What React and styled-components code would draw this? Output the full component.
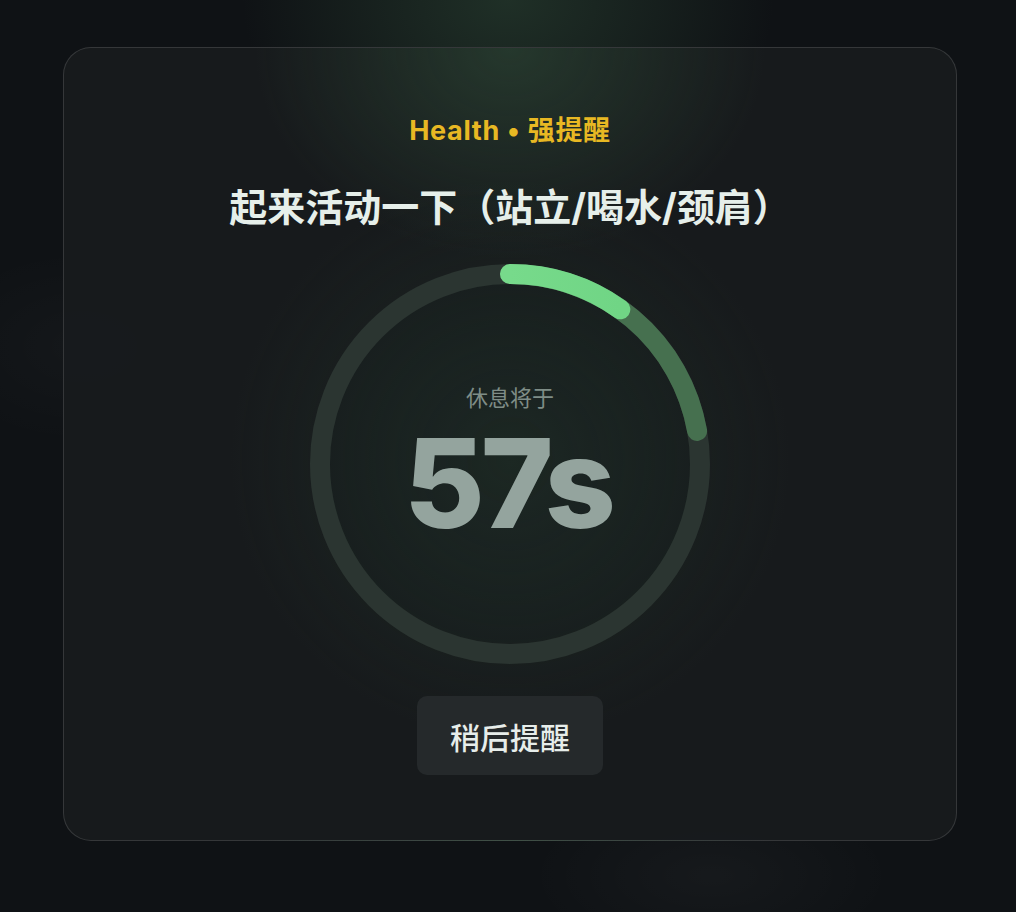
import styled, { createGlobalStyle } from "styled-components";

const GlobalStyle = createGlobalStyle`
  html, body {
    margin: 0;
    padding: 0;
    min-height: 100%;
  }
  body {
    background:
      radial-gradient(ellipse 380px 280px at 50% 0%, rgba(58, 96, 68, 0.38), transparent 70%),
      radial-gradient(ellipse 220px 140px at 8% 38%, rgba(255, 255, 255, 0.025), transparent 70%),
      radial-gradient(ellipse 260px 120px at 70% 96%, rgba(255, 255, 255, 0.03), transparent 70%),
      #0f1215;
    font-family: Inter, "Noto Sans CJK SC", sans-serif;
  }
`;

const Page = styled.div`
  width: 1016px;
  height: 912px;
  padding: 47px 0 0 63px;
  box-sizing: border-box;
`;

const Card = styled.div`
  width: 894px;
  height: 794px;
  box-sizing: border-box;
  border: 1px solid rgba(255, 255, 255, 0.13);
  border-radius: 28px;
  background:
    radial-gradient(ellipse 340px 280px at 50% 0%, rgba(50, 84, 60, 0.5), transparent 75%),
    radial-gradient(circle 280px at 50% 52%, rgba(34, 54, 42, 0.5), transparent 100%),
    rgba(24, 27, 29, 0.92);
  display: flex;
  flex-direction: column;
  align-items: center;
  padding-top: 67px;
`;

const Kicker = styled.div`
  font-size: 27px;
  line-height: 32px;
  font-weight: 700;
  color: #e8b823;
  letter-spacing: 0.7px;
`;

const Title = styled.h1`
  margin: 38px 0 0;
  font-size: 38px;
  line-height: 44px;
  font-weight: 700;
  color: #e6efea;
`;

const Ring = styled.div`
  margin-top: 35px;
  width: 400px;
  height: 400px;
  display: grid;
  & > * {
    grid-area: 1 / 1;
  }
`;

const Center = styled.div`
  display: flex;
  flex-direction: column;
  align-items: center;
  justify-content: center;
  padding-bottom: 10px;
`;

const Label = styled.div`
  font-size: 22px;
  line-height: 26px;
  color: #7f8d87;
`;

const Count = styled.div`
  margin-top: 22px;
  font-size: 124px;
  line-height: 100px;
  font-weight: 800;
  color: #94a49e;
  letter-spacing: -4px;
  padding-right: 4px;
`;

const LaterButton = styled.button`
  margin-top: 32px;
  width: 186px;
  height: 79px;
  border: none;
  border-radius: 10px;
  background: #25292b;
  color: #e7edea;
  font-family: Inter, "Noto Sans CJK SC", sans-serif;
  font-size: 30px;
  font-weight: 500;
  cursor: pointer;
`;

const polar = (deg, r) => {
  const a = ((deg - 90) * Math.PI) / 180;
  return [200 + r * Math.cos(a), 200 + r * Math.sin(a)];
};

const arc = (deg, r = 190) => {
  const [x, y] = polar(deg, r);
  return `M 200 ${200 - r} A ${r} ${r} 0 ${deg > 180 ? 1 : 0} 1 ${x} ${y}`;
};

const Countdown = ({ seconds }) => (
  <Ring>
    <svg width="400" height="400" viewBox="0 0 400 400">
      <defs>
        <linearGradient id="bright" x1="0" y1="0" x2="1" y2="0">
          <stop offset="0" stopColor="#77da8b" />
          <stop offset="1" stopColor="#70d585" />
        </linearGradient>
      </defs>
      <circle cx="200" cy="200" r="190" fill="none" stroke="#2b3531" strokeWidth="20" />
      <path d={arc(80)} fill="none" stroke="#46704f" strokeWidth="20" strokeLinecap="round" />
      <path d={arc(35.5)} fill="none" stroke="url(#bright)" strokeWidth="20" strokeLinecap="round" />
    </svg>
    <Center>
      <Label>休息将于</Label>
      <Count>{seconds}s</Count>
    </Center>
  </Ring>
);

export default function App() {
  return (
    <>
      <GlobalStyle />
      <Page>
        <Card>
          <Kicker>Health • 强提醒</Kicker>
          <Title>起来活动一下（站立/喝水/颈肩）</Title>
          <Countdown seconds={57} />
          <LaterButton>稍后提醒</LaterButton>
        </Card>
      </Page>
    </>
  );
}
